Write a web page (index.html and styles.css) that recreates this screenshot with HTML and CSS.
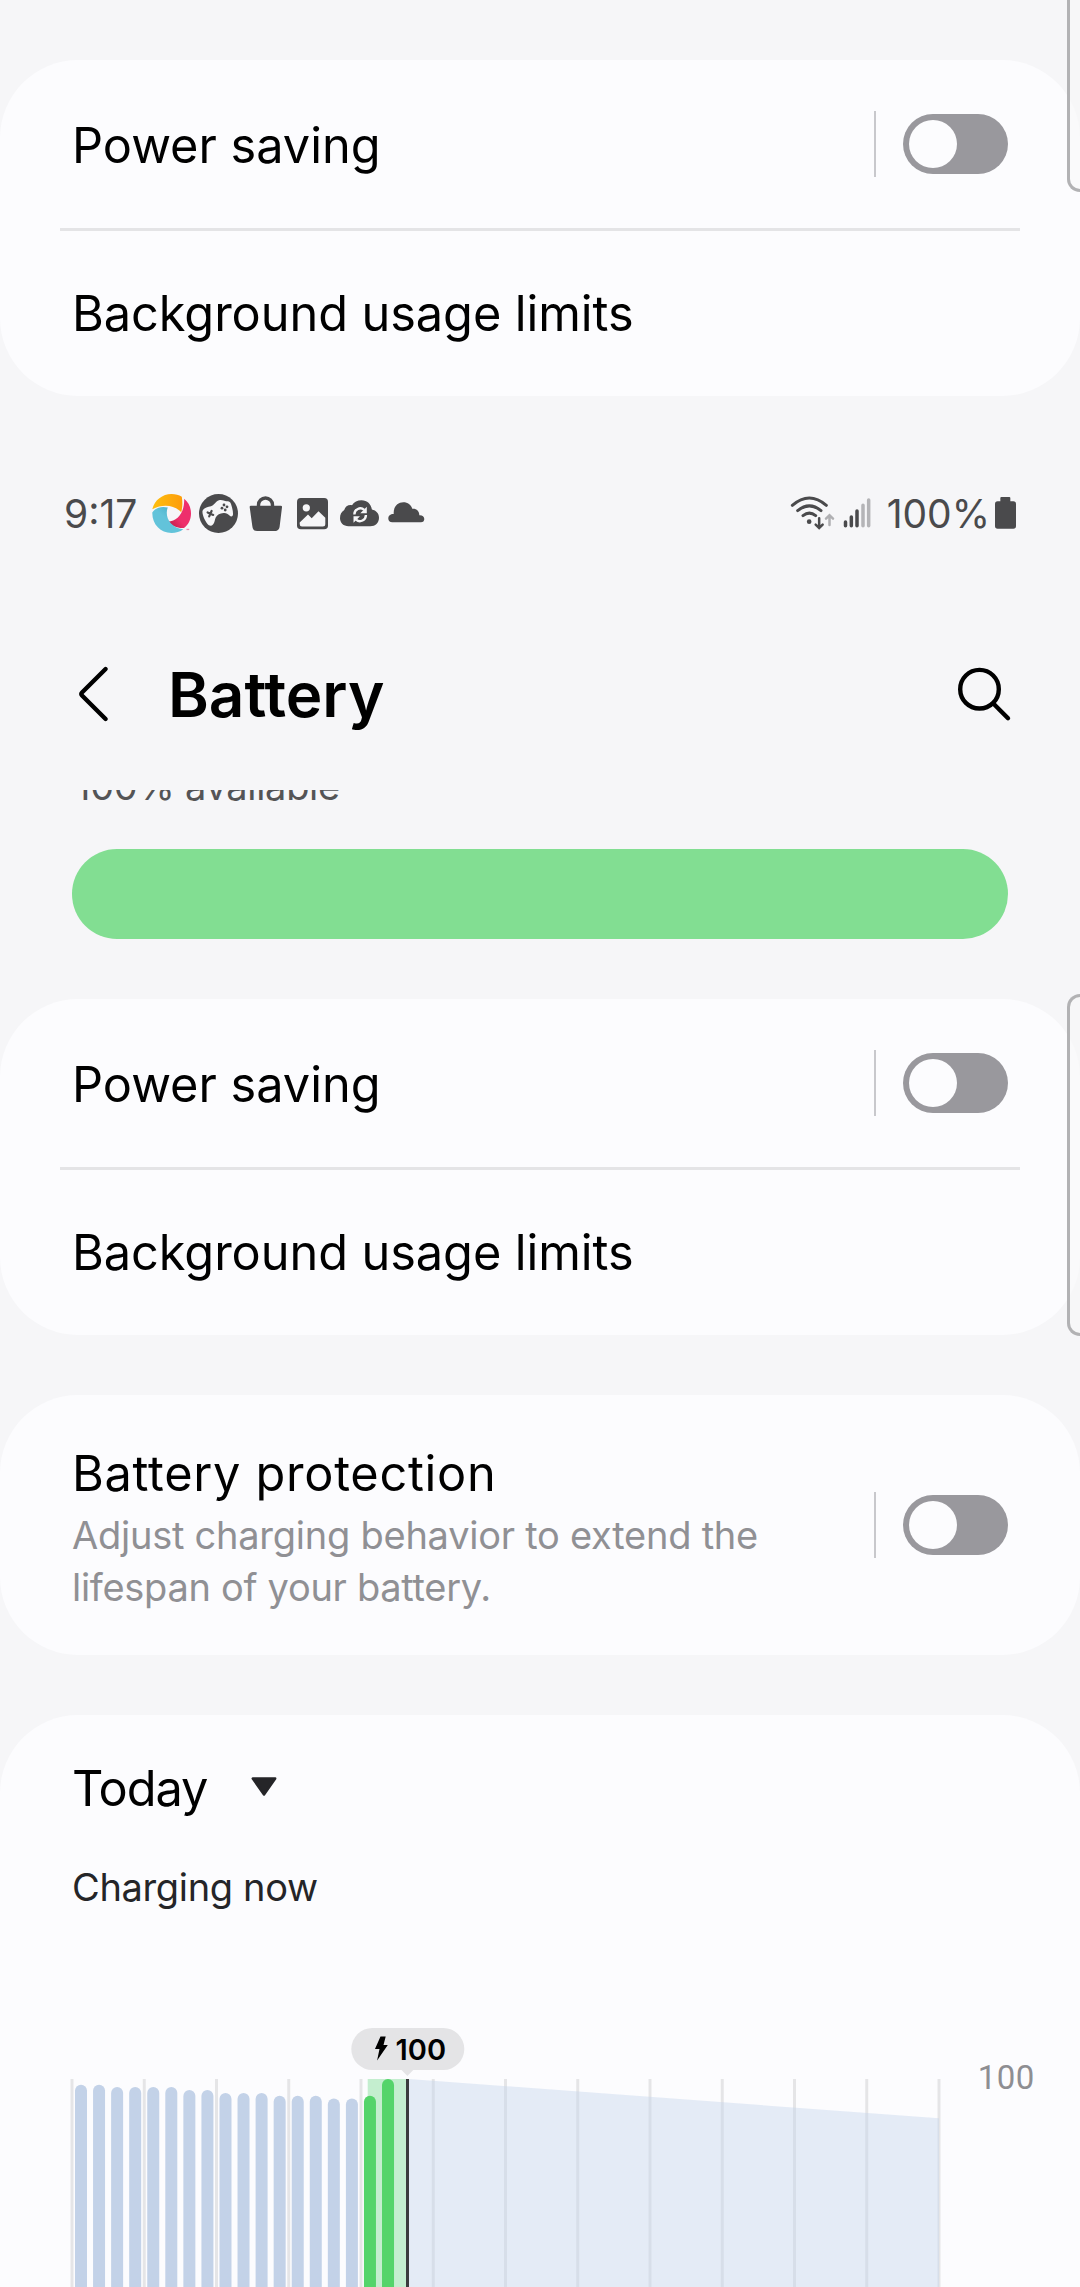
FILE: index.html
```html
<!DOCTYPE html>
<html lang="en">
<head>
<meta charset="utf-8">
<title>Battery</title>
<link rel="stylesheet" href="styles.css">
</head>
<body>
<section class="card card-first">
  <div class="row">
    <span class="label">Power saving</span>
    <span class="control"><span class="switch"></span></span>
  </div>
  <hr class="divider">
  <div class="row row-last"><span class="label label-wide">Background usage limits</span></div>
  <div class="edge-handle edge-top"></div>
</section>

<div class="status">
  <span class="time">9:17</span>
  <div class="notifications">
    <svg viewBox="0 0 39 39">
      <defs>
        <linearGradient id="gy"><stop offset="0" stop-color="#fdc010"/><stop offset="1" stop-color="#fd9c0a"/></linearGradient>
        <linearGradient id="gp" x1="0" y1="1" x2="1" y2="0"><stop offset="0" stop-color="#b5173f"/><stop offset=".4" stop-color="#ee2f6c"/></linearGradient>
        <linearGradient id="gb" x1="1" y1="0" x2="0" y2="1"><stop offset="0" stop-color="#3ba5bd"/><stop offset=".5" stop-color="#62c3da"/></linearGradient>
      </defs>
      <path fill="url(#gy)" d="M.3 15.300C2.500 6 10.500 0 19.500 0c4 0 7.500.9 10.300 2.800.9 5.600.7 10.700-.6 15.500C24 12 12 9 .3 15.300z"/>
      <path fill="url(#gp)" d="M32.200 4.800C36.800 8.500 39 13.800 39 19.500c0 6.400-2.800 11.300-7 14.500-6.500.5-12.500-2-16-6.500C26 27 32.500 18.500 32.200 4.800z"/>
      <path fill="url(#gb)" d="M.3 18.500c3.500-5 9-6.500 15.500-5C12.500 21 17 33.500 31.300 35.300 28 37.800 24 39 19.500 39 8.500 39 0 30.500.3 18.500z"/>
      <path fill="#ee8fb0" d="M34.500 34.800h2.700v1.300h-2.700z"/>
    </svg>
    <svg viewBox="0 0 39 39">
      <circle cx="19.500" cy="19.500" r="19.500" fill="#4a4a4c"/>
      <path fill="#f6f6f8" d="M3.500 17c1.300-3.500 5-3.700 8.500-4.700C15 11.500 16.500 7.500 20 6.300c3-.9 5 .8 7.500.9 2.300.1 3.700.2 4.500 2.800 1.200 3.800 2.200 7.500 2 10.500-.3 2.300-2 2.400-3.500 1-1.800-1.600-3.200-2.800-6-2.500-3.500.4-6.500 1.600-7.800 4.500-1 2.400-1 5-2.700 7-1.500 1.800-4 1.500-5.500-.5C6 27 3 20.500 3.500 17z"/>
      <path stroke="#4a4a4c" stroke-width="2.200" stroke-linecap="round" d="M8.600 18.500l5.600 2.400M12.600 17l-2.400 5.400"/>
      <g fill="#4a4a4c"><circle cx="23" cy="14.200" r="1.400"/><circle cx="25" cy="11" r="1.400"/><circle cx="28" cy="12.800" r="1.400"/><circle cx="26.200" cy="16" r="1.400"/></g>
    </svg>
    <svg viewBox="0 0 39 39">
      <path fill="none" stroke="#4a4a4c" stroke-width="3.400" d="M12.500 14v-3a7 7 0 0 1 14 0v3"/>
      <path fill="#4a4a4c" d="M5 11.700h29.700a1.300 1.300 0 0 1 1.300 1.500L33.700 32c-.4 3.500-1.800 5-5 5H11.300c-3.200 0-4.600-1.500-5-5L3.700 13.200a1.300 1.300 0 0 1 1.300-1.500z"/>
    </svg>
    <svg viewBox="0 0 39 39">
      <rect x="4" y="4" width="31" height="31.300" rx="3.800" fill="#4a4a4c"/>
      <circle cx="13.300" cy="13.800" r="3.600" fill="#f6f6f8"/>
      <path fill="#f6f6f8" d="M6.700 28.500l8.300-8 3.700 3.700 6.800-7 6.800 6.500V30q0 2.500-2.500 2.500H9Q6.700 32.500 6.700 30z"/>
    </svg>
    <svg viewBox="0 0 39 39">
      <path fill="#4a4a4c" d="M8.500 32.300C3.500 32.300 0 28.700 0 24.300c0-4.300 1.500-6.500 4.300-8.300C5 12.500 8.500 10.500 12 11.200 14 8 17.500 6.200 21.500 6.200c5.800 0 9.500 3.800 10.400 9.300 4.400 1 7.100 4 7.100 8.300 0 5-3.700 8.500-8.700 8.500z"/>
      <g fill="none" stroke="#f6f6f8" stroke-width="2.400"><path d="M14.400 20.500a5.900 5.900 0 0 1 9.800-4.600M25.900 21a5.900 5.900 0 0 1-9.800 4.600"/></g>
      <path fill="#f6f6f8" d="M26.800 12.800v6.500h-6.500zM13.500 28.700v-6.500h6.500z"/>
    </svg>
    <svg viewBox="0 0 39 39">
      <path fill="#4a4a4c" d="M5.300 28.300c-2.600 0-4-1.800-4-3.900 0-3 2.500-4.700 5.400-4.500C6.200 13 10.500 8.300 16.300 8.300c4.500 0 7.700 2.500 9 6.500 4.200-.5 7.200 2.500 7 6.500 2.700-.3 5 1.300 5 3.700 0 2-1.300 3.300-3.300 3.300z"/>
    </svg>
  </div>
  <div class="system">
    <svg class="wifi" viewBox="90 41 135 117" fill="none" stroke="#4a4a4c" stroke-width="9" stroke-linecap="round">
      <path d="M97 75q51-44 102 0M113 91q35-29 70 0M129 106q19-15 38 0"/>
      <circle cx="147.500" cy="124" r="7" fill="#4a4a4c" stroke="none"/>
      <path stroke-width="7.500" d="M177.500 114v28M167 133l10.500 10 10.500-10"/>
      <path stroke="#b0b0b3" stroke-width="7.500" d="M208.500 134v-28M198 115l10.500-10 10.500 10"/>
    </svg>
    <svg class="signal" viewBox="250 41 84 117" stroke="#4a4a4c" stroke-width="10.500" stroke-linecap="round">
      <path d="M257.500 125v11M275 110v26M292 92v44"/>
      <path stroke="#b4b4b7" d="M310 75v61M327 59v77"/>
    </svg>
    <span class="percent">100%</span>
    <svg class="cell" viewBox="705 41 63 117"><path fill="#4a4a4c" d="M724 50h24q3 0 3 3v10h9q8 0 8 8v66q0 8-8 8h-47q-8 0-8-8V71q0-8 8-8h8V53q0-3 3-3z"/></svg>
  </div>
</div>

<header class="header">
  <svg class="icon" viewBox="0 0 60 60"><path d="M45.600 5L22 28.500q-1.500 1.500 0 3L45.600 55"/></svg>
  <h1 class="title">Battery</h1>
  <svg class="icon search" viewBox="0 0 60 60"><circle cx="27.500" cy="25.200" r="19.300"/><path d="M41.300 39.500L56 54.200"/></svg>
</header>

<section class="level">
  <div class="level-text">100% available</div>
</section>
<div class="level-bar"></div>

<section class="card">
  <div class="row">
    <span class="label">Power saving</span>
    <span class="control"><span class="switch"></span></span>
  </div>
  <hr class="divider">
  <div class="row row-last"><span class="label label-wide">Background usage limits</span></div>
  <div class="edge-handle edge-full"></div>
</section>

<section class="card protection">
  <div class="protection-text">
    <h2 class="label label-protection">Battery protection</h2>
    <p class="hint"><span>Adjust charging behavior to extend the</span><br>lifespan of your battery.</p>
  </div>
  <span class="control"><span class="switch"></span></span>
</section>

<section class="card usage">
  <div class="period">
    <h2 class="label label-today">Today</h2>
    <svg class="caret" viewBox="0 0 26 19"><path d="M1.800 1.500h22.400L13 17.500z"/></svg>
  </div>
  <p class="charging">Charging now</p>
  <svg class="chart" viewBox="0 1910 1080 377">
    <g class="grid" id="grid"></g>
    <g class="bars" id="bars"></g>
    <path class="charge-band" d="M367.700 2079H406v208h-38.300z"/>
    <g class="bars-charging" id="charging"></g>
    <path class="forecast" d="M409 2079l530 39.300V2287H409z"/>
    <path class="now" d="M406 2079h3v208h-3z"/>
    <rect class="bubble" x="351.300" y="2028" width="113" height="42" rx="21"/>
    <path class="bubble" d="M401 2069.500h12.800l-6.400 6.500z"/>
    <path d="M380.500 2036.500h5.200l-2.200 8.600h4.300l-10.700 15.500 2.400-11.600h-4.500z"/>
    <text class="bubble-value" x="395.500" y="2060">100</text>
    <text class="axis-value" x="977.800" y="2089">100</text>
  </svg>
</section>
<script src="chart.js"></script>
</body>
</html>
```
FILE: styles.css
```css
* { box-sizing: border-box; }

body {
  display: flow-root;
  margin: 0;
  width: 1080px;
  height: 2287px;
  overflow: hidden;
  background: #f6f6f8;
  color: #000;
  font-family: Inter, "Liberation Sans", sans-serif;
}

h1, h2, p { margin: 0; font-weight: 400; }

svg { display: block; flex: none; }

.card {
  position: relative;
  background: #fcfcfe;
  border-radius: 78px;
}

.card-first { margin-top: 60px; }

.row {
  display: flex;
  align-items: center;
  justify-content: space-between;
  height: 168px;
  padding: 4px 72px 0;
}
.row .control { margin-top: -4px; }
.row-last { height: 165px; padding-top: 0; }

.label {
  font-size: 48.7px;
  line-height: 58px;
}
.label-wide { letter-spacing: -0.07px; }
.label-protection { letter-spacing: 0.7px; }
.label-today { letter-spacing: -1.05px; }

.divider {
  height: 3px;
  margin: 0 60px;
  border: 0;
  background: #e4e4e6;
}

.control {
  display: flex;
  align-items: center;
  gap: 27px;
}
.control::before {
  content: "";
  width: 2px;
  height: 66px;
  background: #c8c8cc;
}
.switch {
  width: 105px;
  height: 60px;
  padding: 6px;
  border-radius: 30px;
  background: #99989d;
}
.switch::before {
  content: "";
  display: block;
  width: 48px;
  height: 48px;
  border-radius: 50%;
  background: #fcfcfe;
}

.edge-handle {
  position: absolute;
  left: 1067px;
  width: 13px;
  border: 3px solid #b2b2b4;
  border-right: 0;
  background: rgba(249, 249, 249, 0.6);
}
.edge-top {
  top: -60px;
  height: 192px;
  border-top: 0;
  border-radius: 0 0 0 13px;
}
.edge-full {
  top: -5px;
  height: 342px;
  border-radius: 13px 0 0 13px;
}

.status {
  display: flex;
  align-items: center;
  height: 66px;
  margin-top: 84px;
  padding: 0 64px;
  font-size: 39px;
  color: #4a4a4c;
}
.time { width: 88px; }
.notifications { display: flex; gap: 8px; }
.notifications svg { width: 39px; height: 39px; }
.system {
  display: flex;
  align-items: center;
  margin-left: auto;
}
.wifi { width: 45px; height: 39px; margin-right: 8px; }
.signal { width: 28px; height: 39px; margin-right: 16px; }
.cell { width: 21px; height: 39px; margin-left: 5px; }

.header {
  display: flex;
  align-items: center;
  gap: 48px;
  height: 244px;
  padding: 52px 68px 0 60px;
}
.icon {
  width: 60px;
  height: 60px;
  fill: none;
  stroke: #000;
  stroke-width: 4.400;
  stroke-linecap: round;
}
.search { margin-left: auto; }
.title {
  font-size: 62px;
  font-weight: 600;
}

.level {
  height: 59px;
  padding-left: 75px;
  overflow: hidden;
}
.level-text {
  margin-top: -27px;
  font-size: 38px;
  line-height: 46px;
  letter-spacing: -0.3px;
  color: #545456;
}
.level-bar {
  height: 90px;
  margin: 0 72px 60px;
  border-radius: 45px;
  background: #82de92;
}

.protection {
  display: flex;
  align-items: center;
  justify-content: space-between;
  height: 260px;
  margin: 60px 0;
  padding: 0 72px;
}
.protection-text {
  align-self: flex-start;
  padding-top: 50px;
}
.hint {
  margin-top: 6px;
  font-size: 38px;
  line-height: 52px;
  letter-spacing: -0.3px;
  color: #909094;
}
.hint span { letter-spacing: -0.25px; }

.usage {
  padding-top: 45px;
  border-radius: 78px 78px 0 0;
}
.period {
  display: flex;
  align-items: center;
  gap: 44px;
  padding-left: 72px;
}
.caret {
  width: 26px;
  height: 19px;
  margin-top: -6px;
  fill: #252528;
  stroke: #252528;
  stroke-width: 2.500;
  stroke-linejoin: round;
}
.charging {
  margin-top: 46px;
  padding-left: 72px;
  font-size: 38px;
  line-height: 46px;
  letter-spacing: -0.35px;
  color: #252528;
}

.chart { width: 1080px; height: 377px; }
.grid { fill: #e5e5e7; }
.bars { fill: #c3d2e8; }
.bars-charging { fill: #54d46a; }
.charge-band { fill: #c4eecf; }
.forecast { fill: rgba(195, 211, 235, 0.42); }
.now { fill: #3b3b3d; }
.bubble { fill: #e4e4e6; }
.bubble-value { font-size: 29px; font-weight: 600; }
.axis-value {
  font-family: Roboto, sans-serif;
  font-size: 33px;
  letter-spacing: 0.4px;
  fill: #8e8e92;
}
```
FILE: chart.js
```js
const NS = "http://www.w3.org/2000/svg";
const BOTTOM = 2300;

function addRect(parent, x, y, width, radius) {
  const rect = document.createElementNS(NS, "rect");
  rect.setAttribute("x", x);
  rect.setAttribute("y", y);
  rect.setAttribute("width", width);
  rect.setAttribute("height", BOTTOM - y);
  rect.setAttribute("rx", radius);
  document.getElementById(parent).appendChild(rect);
}

// two-hour grid lines
for (let i = 0; i <= 12; i++) addRect("grid", 70.5 + i * 72.25, 2079, 3, 0);

// half-hour battery levels, top edge of each bar
const tops = [
  2084.7, 2084.7, 2087, 2087, 2087, 2087, 2090, 2090, 2093,
  2093, 2093, 2095.8, 2095.8, 2095.8, 2098.6, 2098.6, 2095.8, 2079
];
tops.forEach((top, i) => addRect(i < 16 ? "bars" : "charging", 75 + i * 18.06, top, 12, 6));
```
